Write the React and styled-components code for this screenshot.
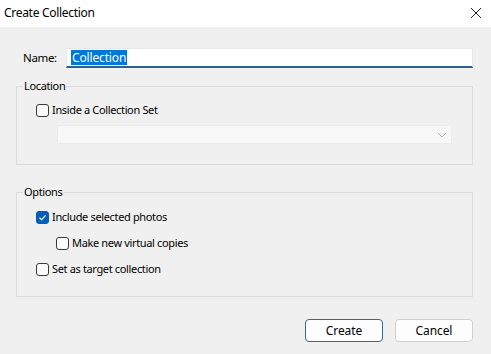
import React from "react";
import styled, { createGlobalStyle } from "styled-components";

const Global = createGlobalStyle`
  html, body { margin: 0; padding: 0; }
  body {
    width: 491px; height: 354px; overflow: hidden;
    background: #f0f0f0;
    font-family: "Noto Sans", "Open Sans", sans-serif;
    font-size: 11px; letter-spacing: -0.35px; color: #000;
  }
`;

const Window = styled.div`
  width: 491px; height: 354px;
  display: flex; flex-direction: column;
  background: #f0f0f0;
`;

const TitleBar = styled.div`
  height: 27px; background: #fff;
  display: flex; align-items: center; justify-content: space-between;
  padding: 0 9px 2px 4px; box-sizing: border-box;
  font-size: 12px; letter-spacing: -0.3px;
`;

const CloseIcon = styled.svg`
  width: 12px; height: 12px; display: block;
`;

const Body = styled.div`
  flex: 1; display: flex; flex-direction: column;
  padding: 21px 18px 0 16px;
`;

const NameRow = styled.div`
  display: flex; align-items: center; height: 20px;
  padding-left: 7px;
`;

const NameLabel = styled.label`
  width: 43px; flex: none; line-height: 16px;
  font-size: 11.5px;
`;

const NameInput = styled.div`
  flex: 1; height: 20px; box-sizing: border-box;
  background: #fff; border: 1px solid #e8e8e8;
  border-bottom: 2px solid #2a6293;
  display: flex; align-items: center; padding-left: 4px;
  font-size: 12px; letter-spacing: -0.15px;
`;

const Selected = styled.span`
  background: #0078d7; color: #fff; line-height: 15px; padding: 0 1px;
`;

const Group = styled.fieldset`
  margin: ${p => p.$top}px 0 0 0; padding: 0 0 ${p => p.$bottom}px 19px;
  border: 1px solid #dcdcdc; min-width: 0;
  display: flex; flex-direction: column;
`;

const Legend = styled.legend`
  margin-left: -13px; padding: 0 1px; line-height: 16px;
`;

const CheckRow = styled.label`
  display: flex; align-items: center; gap: 3px; height: 16px;
  margin-top: ${p => p.$top}px; padding-left: ${p => p.$indent || 0}px;
  line-height: 16px;
`;

const Box = styled.span`
  width: 13px; height: 13px; box-sizing: border-box; flex: none;
  border-radius: 3px;
  border: 1px solid ${p => (p.$checked ? "#005fb8" : "#3a3a3a")};
  background: ${p => (p.$checked ? "#005fb8" : "#fbfbfb")};
  display: flex; align-items: center; justify-content: center;
`;

const Select = styled.div`
  margin: 7px 20px 0 21px; height: 19px; box-sizing: border-box;
  background: #f8f8f8; border: 1px solid #ececec; border-radius: 2px;
  display: flex; align-items: center; justify-content: flex-end;
  padding-right: 4px;
`;

const Footer = styled.div`
  display: flex; justify-content: flex-end; gap: 12px;
  margin-top: 22px;
`;

const Button = styled.button`
  width: 78px; height: 23px; box-sizing: border-box;
  font-family: inherit; font-size: 12px; letter-spacing: -0.1px; color: #000;
  background: #fdfdfd; border-radius: 4px; padding: 0;
  border: 1px solid ${p => (p.$primary ? "#2f6a9a" : "#d0d0d0")};
`;

function Checkbox({ checked, label, top, indent }) {
  return (
    <CheckRow $top={top} $indent={indent}>
      <Box $checked={checked}>
        {checked && (
          <svg width="9" height="9" viewBox="0 0 9 9">
            <path d="M1.5 4.7 L3.6 6.7 L7.6 2.3" fill="none" stroke="#fff" strokeWidth="1.2" />
          </svg>
        )}
      </Box>
      <span>{label}</span>
    </CheckRow>
  );
}

export default function App() {
  return (
    <Window>
      <Global />
      <TitleBar>
        <span>Create Collection</span>
        <CloseIcon viewBox="0 0 12 12">
          <path d="M1 1 L11 11 M11 1 L1 11" stroke="#222" strokeWidth="1" fill="none" />
        </CloseIcon>
      </TitleBar>
      <Body>
        <NameRow>
          <NameLabel>Name:</NameLabel>
          <NameInput>
            <Selected>Collection</Selected>
          </NameInput>
        </NameRow>
        <Group $top={10} $bottom={20}>
          <Legend>Location</Legend>
          <Checkbox label="Inside a Collection Set" top={8} />
          <Select>
            <svg width="10" height="6" viewBox="0 0 10 6">
              <path d="M1 1 L5 5 L9 1" fill="none" stroke="#b4b4b4" strokeWidth="1" />
            </svg>
          </Select>
        </Group>
        <Group $top={19} $bottom={19}>
          <Legend>Options</Legend>
          <Checkbox label="Include selected photos" checked top={9} />
          <Checkbox label="Make new virtual copies" top={10} indent={20} />
          <Checkbox label="Set as target collection" top={10} />
        </Group>
        <Footer>
          <Button $primary>Create</Button>
          <Button>Cancel</Button>
        </Footer>
      </Body>
    </Window>
  );
}
